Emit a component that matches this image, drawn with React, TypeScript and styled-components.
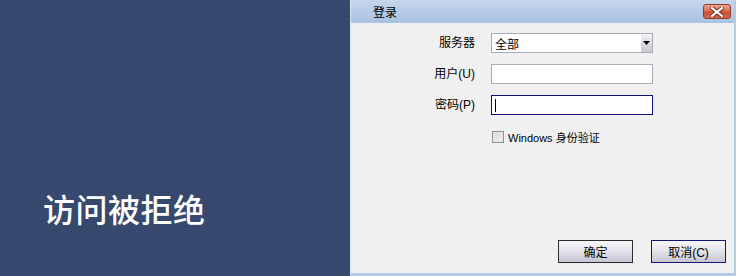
import styled, { createGlobalStyle } from 'styled-components'

const GlobalStyle = createGlobalStyle`
  html, body {
    margin: 0;
    padding: 0;
    width: 736px;
    height: 276px;
    overflow: hidden;
    background: #36476d;
  }
  * {
    box-sizing: border-box;
  }
`

const uiFont = `"Liberation Sans", "Noto Sans CJK SC", sans-serif`

const Page = styled.div`
  display: flex;
  width: 736px;
  height: 276px;
  font-family: ${uiFont};
  font-size: 12px;
  color: #000;
`

const Backdrop = styled.div`
  width: 350px;
  flex-shrink: 0;
  background-color: #36476d;
  background-image: repeating-linear-gradient(
    0deg,
    rgba(255, 255, 255, 0.015) 0px,
    rgba(255, 255, 255, 0.015) 1px,
    transparent 1px,
    transparent 2px
  );
  padding: 186px 0 0 43px;
`

const DeniedText = styled.div`
  font-family: "Noto Sans CJK SC", sans-serif;
  font-size: 32px;
  font-weight: 500;
  line-height: 44px;
  color: #ffffff;
  letter-spacing: 0.5px;
`

const Dialog = styled.div`
  flex: 1;
  display: flex;
  flex-direction: column;
  border-left: 1px solid #dbe6f3;
  border-right: 2px solid #b4c9e4;
  border-bottom: 3px solid #b4c9e4;
  background: #f0f0f0;
`

const TitleBar = styled.div`
  height: 23px;
  display: flex;
  align-items: center;
  justify-content: space-between;
  padding: 0 3px 0 22px;
  background: linear-gradient(to bottom, #c6d7ec 0%, #b3c9e5 60%, #a9c2e2 100%);
`

const Title = styled.span`
  font-size: 12px;
  color: #000;
`

const CloseButton = styled.div`
  width: 28px;
  height: 15px;
  border: 1px solid #8d3b2c;
  border-radius: 3px;
  background: linear-gradient(to bottom, #eca491 0%, #d9704f 45%, #c8502f 55%, #d26a4d 100%);
  display: flex;
  align-items: center;
  justify-content: center;
`

const Body = styled.div`
  flex: 1;
  display: flex;
  flex-direction: column;
  padding: 10px 8px 10px 0;
`

const Form = styled.div`
  display: grid;
  grid-template-columns: 124px 162px;
  column-gap: 16px;
  row-gap: 11px;
  align-items: center;
`

const Label = styled.span`
  text-align: right;
  line-height: 20px;
`

const Field = styled.div<{ $focused?: boolean }>`
  height: 20px;
  background: #ffffff;
  border: 1px solid ${(p) => (p.$focused ? '#10107a' : '#a5acb5')};
  display: flex;
  align-items: center;
  padding-left: 2px;
`

const SelectValue = styled.span`
  flex: 1;
  padding-left: 1px;
`

const DropButton = styled.div`
  width: 11px;
  height: 18px;
  background: linear-gradient(to bottom, #f4f4f6 0%, #dcdce2 50%, #c8c8d0 100%);
  display: flex;
  align-items: center;
  justify-content: center;
`

const Caret = styled.span`
  width: 1px;
  height: 13px;
  background: #000;
  margin-left: 1px;
`

const CheckRow = styled.label`
  display: flex;
  align-items: center;
  gap: 4px;
  margin: 14px 0 0 141px;
  font-size: 11px;
`

const CheckBox = styled.span`
  width: 12px;
  height: 12px;
  border: 1px solid #8e8f8f;
  background: linear-gradient(135deg, #d6d6d6 0%, #f2f2f2 100%);
  box-shadow: inset 0 0 0 1px #e8e8e8;
`

const Footer = styled.div`
  margin-top: auto;
  display: flex;
  justify-content: flex-end;
  gap: 18px;
`

const Button = styled.div<{ $default?: boolean }>`
  width: 75px;
  height: 23px;
  border: 1px solid ${(p) => (p.$default ? '#14147a' : '#2b2b2b')};
  background: linear-gradient(to bottom, #f7f7f9 0%, #e2e2ea 50%, #c6c6d4 100%);
  display: flex;
  align-items: center;
  justify-content: center;
  font-size: 12px;
`

const App = () => {
  return (
    <Page>
      <GlobalStyle />
      <Backdrop>
        <DeniedText>访问被拒绝</DeniedText>
      </Backdrop>
      <Dialog>
        <TitleBar>
          <Title>登录</Title>
          <CloseButton>
            <svg width="14" height="10" viewBox="0 0 14 10">
              <path d="M2 1 L12 9 M12 1 L2 9" stroke="#6b2a1e" strokeWidth="4" strokeLinecap="square" />
              <path d="M2 1 L12 9 M12 1 L2 9" stroke="#ffffff" strokeWidth="2.2" strokeLinecap="square" />
            </svg>
          </CloseButton>
        </TitleBar>
        <Body>
          <Form>
            <Label>服务器</Label>
            <Field>
              <SelectValue>全部</SelectValue>
              <DropButton>
                <svg width="7" height="4" viewBox="0 0 7 4">
                  <path d="M0 0 H7 L3.5 4 Z" fill="#000" />
                </svg>
              </DropButton>
            </Field>
            <Label>用户(U)</Label>
            <Field />
            <Label>密码(P)</Label>
            <Field $focused>
              <Caret />
            </Field>
          </Form>
          <CheckRow>
            <CheckBox />
            <span>Windows 身份验证</span>
          </CheckRow>
          <Footer>
            <Button>确定</Button>
            <Button $default>取消(C)</Button>
          </Footer>
        </Body>
      </Dialog>
    </Page>
  )
}

export default App
